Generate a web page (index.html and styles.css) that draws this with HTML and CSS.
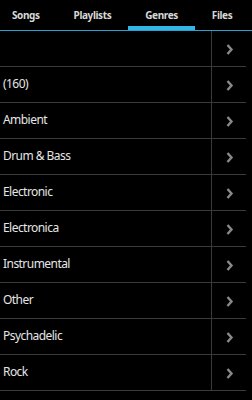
FILE: index.html
```html
<!DOCTYPE html>
<html>
<head>
<meta charset="utf-8">
<link rel="stylesheet" href="styles.css">
</head>
<body>
<div class="tabs">
  <div class="tab">Songs</div>
  <div class="tab">Playlists</div>
  <div class="tab active">Genres</div>
  <div class="tab">Files</div>
</div>
<ul class="list">
  <li class="row"><span class="label"></span><span class="arrow"><svg width="8" height="11" viewBox="0 0 8 11"><path d="M1.5 1 L5.5 5.5 L1.5 10" fill="none" stroke="#8a8a8a" stroke-width="2.4"/></svg></span></li>
  <li class="row"><span class="label">(160)</span><span class="arrow"><svg width="8" height="11" viewBox="0 0 8 11"><path d="M1.5 1 L5.5 5.5 L1.5 10" fill="none" stroke="#8a8a8a" stroke-width="2.4"/></svg></span></li>
  <li class="row"><span class="label">Ambient</span><span class="arrow"><svg width="8" height="11" viewBox="0 0 8 11"><path d="M1.5 1 L5.5 5.5 L1.5 10" fill="none" stroke="#8a8a8a" stroke-width="2.4"/></svg></span></li>
  <li class="row"><span class="label">Drum &amp; Bass</span><span class="arrow"><svg width="8" height="11" viewBox="0 0 8 11"><path d="M1.5 1 L5.5 5.5 L1.5 10" fill="none" stroke="#8a8a8a" stroke-width="2.4"/></svg></span></li>
  <li class="row"><span class="label">Electronic</span><span class="arrow"><svg width="8" height="11" viewBox="0 0 8 11"><path d="M1.5 1 L5.5 5.5 L1.5 10" fill="none" stroke="#8a8a8a" stroke-width="2.4"/></svg></span></li>
  <li class="row"><span class="label">Electronica</span><span class="arrow"><svg width="8" height="11" viewBox="0 0 8 11"><path d="M1.5 1 L5.5 5.5 L1.5 10" fill="none" stroke="#8a8a8a" stroke-width="2.4"/></svg></span></li>
  <li class="row"><span class="label">Instrumental</span><span class="arrow"><svg width="8" height="11" viewBox="0 0 8 11"><path d="M1.5 1 L5.5 5.5 L1.5 10" fill="none" stroke="#8a8a8a" stroke-width="2.4"/></svg></span></li>
  <li class="row"><span class="label">Other</span><span class="arrow"><svg width="8" height="11" viewBox="0 0 8 11"><path d="M1.5 1 L5.5 5.5 L1.5 10" fill="none" stroke="#8a8a8a" stroke-width="2.4"/></svg></span></li>
  <li class="row"><span class="label">Psychadelic</span><span class="arrow"><svg width="8" height="11" viewBox="0 0 8 11"><path d="M1.5 1 L5.5 5.5 L1.5 10" fill="none" stroke="#8a8a8a" stroke-width="2.4"/></svg></span></li>
  <li class="row"><span class="label">Rock</span><span class="arrow"><svg width="8" height="11" viewBox="0 0 8 11"><path d="M1.5 1 L5.5 5.5 L1.5 10" fill="none" stroke="#8a8a8a" stroke-width="2.4"/></svg></span></li>
</ul>
</body>
</html>
```
FILE: styles.css
```css
html, body {
  margin: 0;
  padding: 0;
  background: #000;
  width: 252px;
  height: 400px;
  overflow: hidden;
  font-family: "Noto Sans", "Open Sans", sans-serif;
}
.tabs {
  display: flex;
  height: 30px;
  border-bottom: 1px solid #2aa3cc;
  white-space: nowrap;
  overflow: hidden;
}
.tab {
  flex: none;
  padding: 0 17px;
  color: #d8d8d8;
  font-weight: bold;
  font-size: 10px;
  letter-spacing: -0.4px;
  line-height: 30px;
  box-sizing: border-box;
  height: 30px;
}
.tab:first-child {
  padding-left: 12px;
}
.tab.active {
  border-bottom: 4px solid #33b5e5;
}
.list {
  list-style: none;
  margin: 0;
  padding: 0;
}
.row {
  display: flex;
  height: 35px;
  width: 246px;
  border-bottom: 1px solid #3a3a3a;
}
.label {
  flex: 1;
  padding-left: 3px;
  color: #e6e6e6;
  font-size: 12px;
  letter-spacing: -0.55px;
  line-height: 33px;
}
.arrow {
  width: 35px;
  border-left: 1px solid #3a3a3a;
  margin-bottom: -1px;
  display: flex;
  align-items: center;
  justify-content: center;
  padding-left: 2px;
  box-sizing: border-box;
}
.arrow svg { display: block; }
```
